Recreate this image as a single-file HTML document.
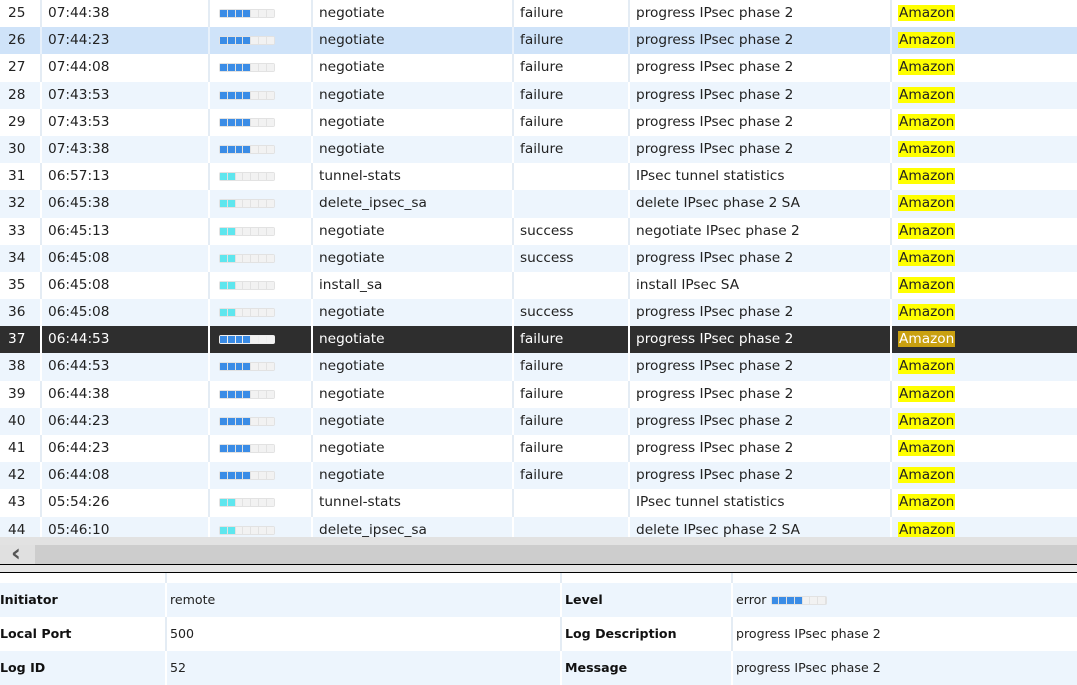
<!DOCTYPE html>
<html><head><meta charset="utf-8"><style>
*{margin:0;padding:0;box-sizing:border-box}
body{width:1077px;height:674px;overflow:hidden;background:#fff;font-family:"DejaVu Sans","Liberation Sans",sans-serif;font-size:13.7px;color:#222;position:relative}
#grid{position:absolute;left:0;top:0;width:1077px}
.r{height:27.2px;position:relative;white-space:nowrap}
.r.a{background:#edf5fd}
.r.s{background:#cfe3f9}
.r.d{background:#2e2e2e;color:#fff}
.c{position:absolute;top:0;height:100%;line-height:27px;border-left:2px solid #e4ecf4}
.r.a .c{border-left-color:#fff}
.r.s .c{border-left-color:#e8f1fb}
.r.d .c{border-left-color:#fff}
.c0{left:0;border:none;padding-left:8px;width:40px}
.c1{left:40px;padding-left:6px;width:168px}
.c2{left:208px;width:103px}
.c3{left:311px;padding-left:6px;width:201px}
.c4{left:512px;padding-left:6px;width:116px}
.c5{left:628px;padding-left:6px;width:262px}
.c6{left:890px;padding-left:6px;width:187px}
.am{background:#ffff00;color:#222;padding:0 1px}
.r.d .am{background:#c9a010;color:#fff}
.bar{position:absolute;left:9px;top:9px;width:56px;height:9px;background:#e2e2e2;border-radius:2px;display:flex;gap:1px;padding:1px}
.bar i{display:block;flex:0 0 6.8px;height:7px;background:#f2f2f2}
.bar i.b{background:#3a8ce6}
.bar i.y{background:#5ee6ee}
.r.d .bar{background:#eee}
#sb1{position:absolute;left:0;top:537px;width:1077px;height:8px;background:#e2e2e2}
#sb2{position:absolute;left:0;top:545px;width:1077px;height:19px;background:#cdcdcd}
#sbl{position:absolute;left:0;top:545px;width:35px;height:19px;background:#e0e0e0;color:#555;font-size:24px;line-height:17px;padding-left:11px;font-weight:bold}
#l1{position:absolute;left:0;top:564px;width:1077px;height:1px;background:#000}
#g2{position:absolute;left:0;top:565px;width:1077px;height:7px;background:#e6e6e6}
#l2{position:absolute;left:0;top:572px;width:1077px;height:1px;background:#000}
#det{position:absolute;left:0;top:573px;width:1077px;font-size:12.6px}
.dr{position:relative;height:10px}
.dr.x{height:34px;line-height:33px}
.dr.a{background:#edf5fd}
.dc{position:absolute;top:0;height:100%;border-left:2px solid #e4ecf4}
.dr.a .dc{border-left-color:#fff}
.k{font-weight:bold;color:#111}
.small{display:inline-block;vertical-align:middle;position:relative;width:56px;height:9px}
.small .bar{left:0;top:0}
</style></head><body>
<div id="grid">
<div class="r"><div class="c c0">25</div><div class="c c1">07:44:38</div><div class="c c2"><div class="bar"><i class="b"></i><i class="b"></i><i class="b"></i><i class="b"></i><i></i><i></i><i></i></div></div><div class="c c3">negotiate</div><div class="c c4">failure</div><div class="c c5">progress IPsec phase 2</div><div class="c c6"><span class="am">Amazon</span></div></div>
<div class="r s"><div class="c c0">26</div><div class="c c1">07:44:23</div><div class="c c2"><div class="bar"><i class="b"></i><i class="b"></i><i class="b"></i><i class="b"></i><i></i><i></i><i></i></div></div><div class="c c3">negotiate</div><div class="c c4">failure</div><div class="c c5">progress IPsec phase 2</div><div class="c c6"><span class="am">Amazon</span></div></div>
<div class="r"><div class="c c0">27</div><div class="c c1">07:44:08</div><div class="c c2"><div class="bar"><i class="b"></i><i class="b"></i><i class="b"></i><i class="b"></i><i></i><i></i><i></i></div></div><div class="c c3">negotiate</div><div class="c c4">failure</div><div class="c c5">progress IPsec phase 2</div><div class="c c6"><span class="am">Amazon</span></div></div>
<div class="r a"><div class="c c0">28</div><div class="c c1">07:43:53</div><div class="c c2"><div class="bar"><i class="b"></i><i class="b"></i><i class="b"></i><i class="b"></i><i></i><i></i><i></i></div></div><div class="c c3">negotiate</div><div class="c c4">failure</div><div class="c c5">progress IPsec phase 2</div><div class="c c6"><span class="am">Amazon</span></div></div>
<div class="r"><div class="c c0">29</div><div class="c c1">07:43:53</div><div class="c c2"><div class="bar"><i class="b"></i><i class="b"></i><i class="b"></i><i class="b"></i><i></i><i></i><i></i></div></div><div class="c c3">negotiate</div><div class="c c4">failure</div><div class="c c5">progress IPsec phase 2</div><div class="c c6"><span class="am">Amazon</span></div></div>
<div class="r a"><div class="c c0">30</div><div class="c c1">07:43:38</div><div class="c c2"><div class="bar"><i class="b"></i><i class="b"></i><i class="b"></i><i class="b"></i><i></i><i></i><i></i></div></div><div class="c c3">negotiate</div><div class="c c4">failure</div><div class="c c5">progress IPsec phase 2</div><div class="c c6"><span class="am">Amazon</span></div></div>
<div class="r"><div class="c c0">31</div><div class="c c1">06:57:13</div><div class="c c2"><div class="bar"><i class="y"></i><i class="y"></i><i></i><i></i><i></i><i></i><i></i></div></div><div class="c c3">tunnel-stats</div><div class="c c4"></div><div class="c c5">IPsec tunnel statistics</div><div class="c c6"><span class="am">Amazon</span></div></div>
<div class="r a"><div class="c c0">32</div><div class="c c1">06:45:38</div><div class="c c2"><div class="bar"><i class="y"></i><i class="y"></i><i></i><i></i><i></i><i></i><i></i></div></div><div class="c c3">delete_ipsec_sa</div><div class="c c4"></div><div class="c c5">delete IPsec phase 2 SA</div><div class="c c6"><span class="am">Amazon</span></div></div>
<div class="r"><div class="c c0">33</div><div class="c c1">06:45:13</div><div class="c c2"><div class="bar"><i class="y"></i><i class="y"></i><i></i><i></i><i></i><i></i><i></i></div></div><div class="c c3">negotiate</div><div class="c c4">success</div><div class="c c5">negotiate IPsec phase 2</div><div class="c c6"><span class="am">Amazon</span></div></div>
<div class="r a"><div class="c c0">34</div><div class="c c1">06:45:08</div><div class="c c2"><div class="bar"><i class="y"></i><i class="y"></i><i></i><i></i><i></i><i></i><i></i></div></div><div class="c c3">negotiate</div><div class="c c4">success</div><div class="c c5">progress IPsec phase 2</div><div class="c c6"><span class="am">Amazon</span></div></div>
<div class="r"><div class="c c0">35</div><div class="c c1">06:45:08</div><div class="c c2"><div class="bar"><i class="y"></i><i class="y"></i><i></i><i></i><i></i><i></i><i></i></div></div><div class="c c3">install_sa</div><div class="c c4"></div><div class="c c5">install IPsec SA</div><div class="c c6"><span class="am">Amazon</span></div></div>
<div class="r a"><div class="c c0">36</div><div class="c c1">06:45:08</div><div class="c c2"><div class="bar"><i class="y"></i><i class="y"></i><i></i><i></i><i></i><i></i><i></i></div></div><div class="c c3">negotiate</div><div class="c c4">success</div><div class="c c5">progress IPsec phase 2</div><div class="c c6"><span class="am">Amazon</span></div></div>
<div class="r d"><div class="c c0">37</div><div class="c c1">06:44:53</div><div class="c c2"><div class="bar"><i class="b"></i><i class="b"></i><i class="b"></i><i class="b"></i><i></i><i></i><i></i></div></div><div class="c c3">negotiate</div><div class="c c4">failure</div><div class="c c5">progress IPsec phase 2</div><div class="c c6"><span class="am">Amazon</span></div></div>
<div class="r a"><div class="c c0">38</div><div class="c c1">06:44:53</div><div class="c c2"><div class="bar"><i class="b"></i><i class="b"></i><i class="b"></i><i class="b"></i><i></i><i></i><i></i></div></div><div class="c c3">negotiate</div><div class="c c4">failure</div><div class="c c5">progress IPsec phase 2</div><div class="c c6"><span class="am">Amazon</span></div></div>
<div class="r"><div class="c c0">39</div><div class="c c1">06:44:38</div><div class="c c2"><div class="bar"><i class="b"></i><i class="b"></i><i class="b"></i><i class="b"></i><i></i><i></i><i></i></div></div><div class="c c3">negotiate</div><div class="c c4">failure</div><div class="c c5">progress IPsec phase 2</div><div class="c c6"><span class="am">Amazon</span></div></div>
<div class="r a"><div class="c c0">40</div><div class="c c1">06:44:23</div><div class="c c2"><div class="bar"><i class="b"></i><i class="b"></i><i class="b"></i><i class="b"></i><i></i><i></i><i></i></div></div><div class="c c3">negotiate</div><div class="c c4">failure</div><div class="c c5">progress IPsec phase 2</div><div class="c c6"><span class="am">Amazon</span></div></div>
<div class="r"><div class="c c0">41</div><div class="c c1">06:44:23</div><div class="c c2"><div class="bar"><i class="b"></i><i class="b"></i><i class="b"></i><i class="b"></i><i></i><i></i><i></i></div></div><div class="c c3">negotiate</div><div class="c c4">failure</div><div class="c c5">progress IPsec phase 2</div><div class="c c6"><span class="am">Amazon</span></div></div>
<div class="r a"><div class="c c0">42</div><div class="c c1">06:44:08</div><div class="c c2"><div class="bar"><i class="b"></i><i class="b"></i><i class="b"></i><i class="b"></i><i></i><i></i><i></i></div></div><div class="c c3">negotiate</div><div class="c c4">failure</div><div class="c c5">progress IPsec phase 2</div><div class="c c6"><span class="am">Amazon</span></div></div>
<div class="r"><div class="c c0">43</div><div class="c c1">05:54:26</div><div class="c c2"><div class="bar"><i class="y"></i><i class="y"></i><i></i><i></i><i></i><i></i><i></i></div></div><div class="c c3">tunnel-stats</div><div class="c c4"></div><div class="c c5">IPsec tunnel statistics</div><div class="c c6"><span class="am">Amazon</span></div></div>
<div class="r a"><div class="c c0">44</div><div class="c c1">05:46:10</div><div class="c c2"><div class="bar"><i class="y"></i><i class="y"></i><i></i><i></i><i></i><i></i><i></i></div></div><div class="c c3">delete_ipsec_sa</div><div class="c c4"></div><div class="c c5">delete IPsec phase 2 SA</div><div class="c c6"><span class="am">Amazon</span></div></div>
</div>
<div id="sb1"></div>
<div id="sb2"></div>
<div id="sbl">&#x2039;</div>
<div id="l1"></div><div id="g2"></div><div id="l2"></div>
<div id="det">
<div class="dr"><div class="dc" style="left:165px"></div><div class="dc" style="left:560px"></div><div class="dc" style="left:731px"></div></div>
<div class="dr x a"><div class="k" style="position:absolute;left:0">Initiator</div><div class="dc" style="left:165px;padding-left:3px">remote</div><div class="dc k" style="left:560px;padding-left:3px">Level</div><div class="dc" style="left:731px;padding-left:3px">error <span class="small"><span class="bar"><i class="b"></i><i class="b"></i><i class="b"></i><i class="b"></i><i></i><i></i><i></i></span></span></div></div>
<div class="dr x"><div class="k" style="position:absolute;left:0">Local Port</div><div class="dc" style="left:165px;padding-left:3px">500</div><div class="dc k" style="left:560px;padding-left:3px">Log Description</div><div class="dc" style="left:731px;padding-left:3px">progress IPsec phase 2</div></div>
<div class="dr x a"><div class="k" style="position:absolute;left:0">Log ID</div><div class="dc" style="left:165px;padding-left:3px">52</div><div class="dc k" style="left:560px;padding-left:3px">Message</div><div class="dc" style="left:731px;padding-left:3px">progress IPsec phase 2</div></div>
</div>
</body></html>
